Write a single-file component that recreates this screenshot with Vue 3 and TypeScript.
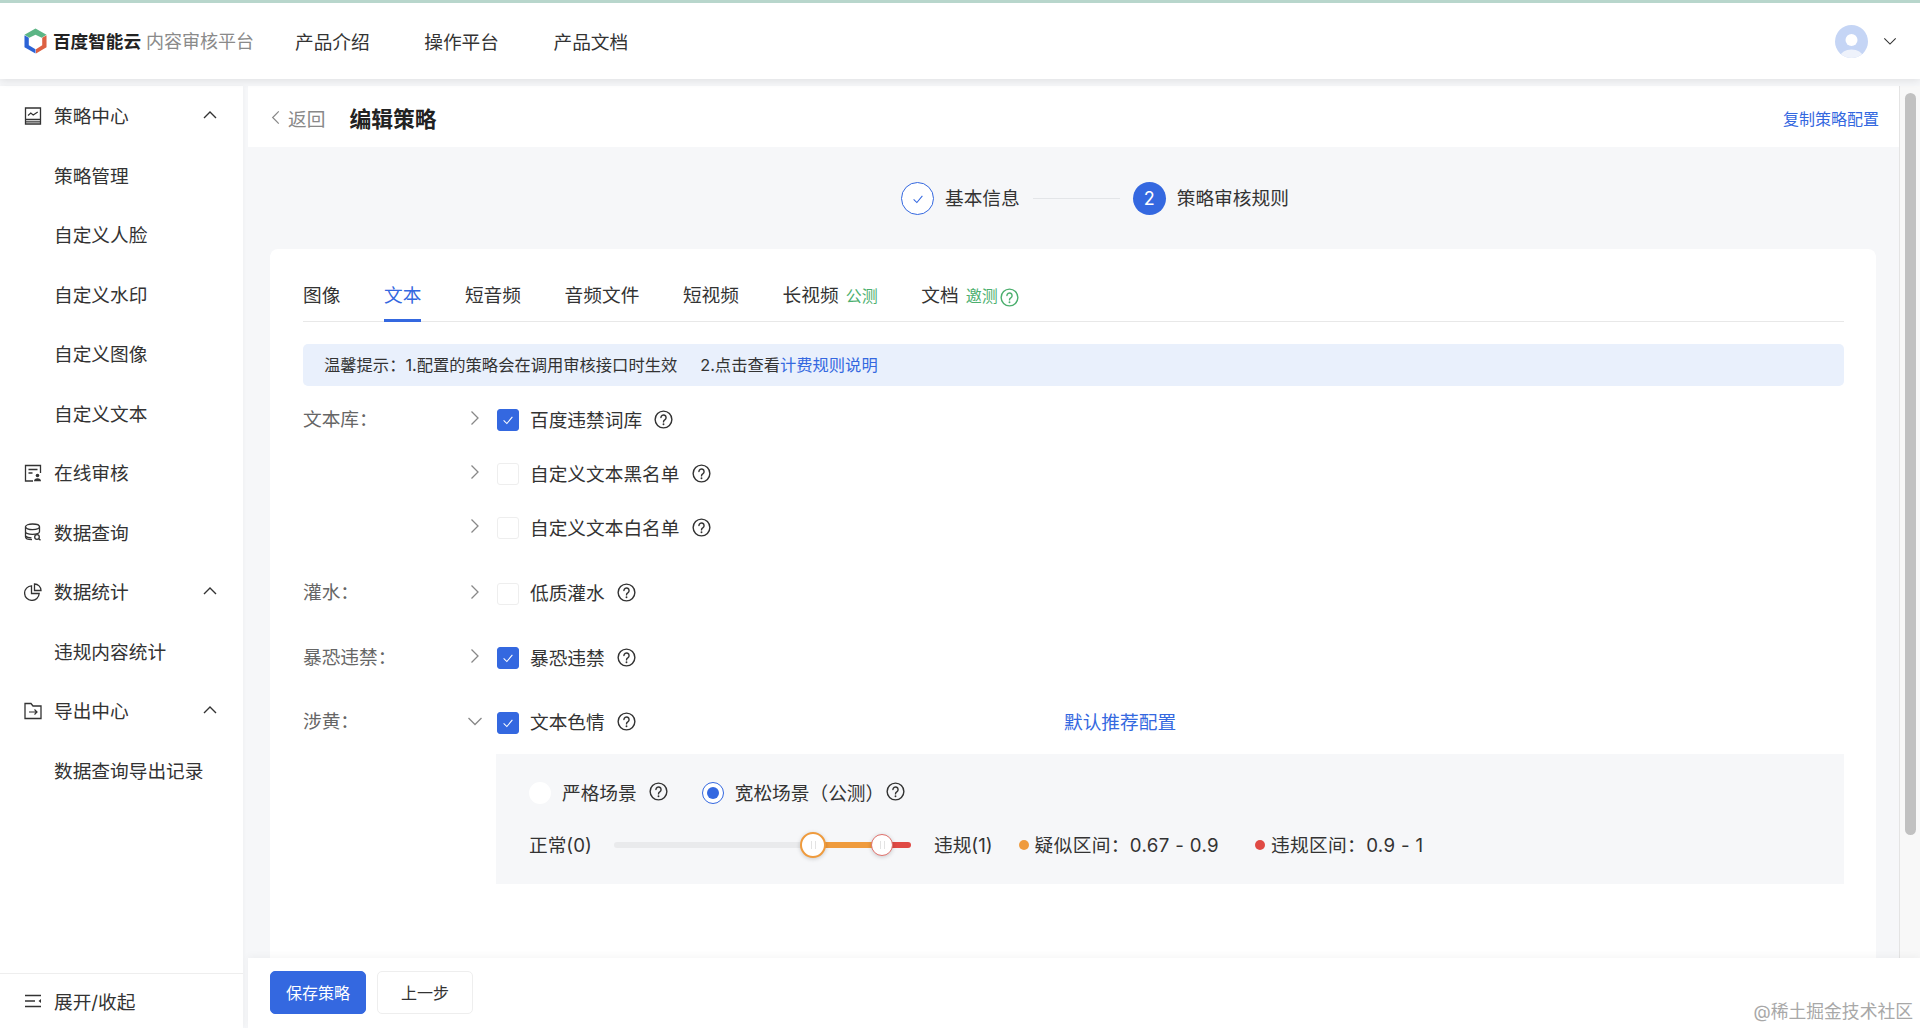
<script setup lang="ts">
interface MenuItem { label: string; icon?: string; sub?: boolean; arrow?: boolean }
interface FormRow { label: string; checked: boolean; text: string; open?: boolean; link?: string; lead?: boolean }

const nav: string[] = ['产品介绍', '操作平台', '产品文档']
const menu: MenuItem[] = [
  { label: '策略中心', icon: 'chart', arrow: true },
  { label: '策略管理', sub: true },
  { label: '自定义人脸', sub: true },
  { label: '自定义水印', sub: true },
  { label: '自定义图像', sub: true },
  { label: '自定义文本', sub: true },
  { label: '在线审核', icon: 'audit' },
  { label: '数据查询', icon: 'db' },
  { label: '数据统计', icon: 'pie', arrow: true },
  { label: '违规内容统计', sub: true },
  { label: '导出中心', icon: 'export', arrow: true },
  { label: '数据查询导出记录', sub: true }
]
const tabs = [
  { label: '图像' },
  { label: '文本', active: true },
  { label: '短音频' },
  { label: '音频文件' },
  { label: '短视频' },
  { label: '长视频', tag: '公测' },
  { label: '文档', tag: '邀测', help: true }
]
const rows: FormRow[] = [
  { label: '文本库：', checked: true, text: '百度违禁词库', lead: true },
  { label: '', checked: false, text: '自定义文本黑名单' },
  { label: '', checked: false, text: '自定义文本白名单' },
  { label: '灌水：', checked: false, text: '低质灌水', lead: true },
  { label: '暴恐违禁：', checked: true, text: '暴恐违禁', lead: true },
  { label: '涉黄：', checked: true, text: '文本色情', open: true, link: '默认推荐配置', lead: true }
]
</script>

<template>
  <div class="page">
    <svg class="sprite" aria-hidden="true">
      <symbol id="help" viewBox="0 0 20 20">
        <circle cx="10" cy="10" r="8.800" fill="none" stroke="currentColor" stroke-width="1.500" />
        <path d="M7.300 7.900a2.700 2.700 0 1 1 4.300 2.200c-1 .7-1.600 1.200-1.600 2.400" fill="none" stroke="currentColor" stroke-width="1.500" stroke-linecap="round" />
        <circle cx="10" cy="15" r="1" fill="currentColor" />
      </symbol>
      <symbol id="chev-right" viewBox="0 0 16 16">
        <path d="M4.500 1.500 11 8l-6.500 6.500" fill="none" stroke="currentColor" stroke-width="1.300" />
      </symbol>
      <symbol id="chev-down" viewBox="0 0 16 16">
        <path d="M1.500 5 8 11.500 14.500 5" fill="none" stroke="currentColor" stroke-width="1.300" />
      </symbol>
      <symbol id="chev-up" viewBox="0 0 16 16">
        <path d="M2 11 8 5l6 6" fill="none" stroke="currentColor" stroke-width="1.400" />
      </symbol>
      <symbol id="tick" viewBox="0 0 16 16">
        <path d="M3 8.300 6.700 12 13 4.500" fill="none" stroke="currentColor" stroke-width="1.200" />
      </symbol>
      <symbol id="chart" viewBox="0 0 18 18">
        <path d="M1.500 1h15v16h-15zM1.500 12.500h15M1.500 14.800h15" fill="none" stroke="currentColor" stroke-width="1.300" />
        <path d="M4 8.500 6.800 6l2.400 2 4.500-3" fill="none" stroke="currentColor" stroke-width="1.200" />
      </symbol>
      <symbol id="audit" viewBox="0 0 18 18">
        <path d="M9 17H1.500V1.500h15V9M4.500 5.500h9M4.500 9h4" fill="none" stroke="currentColor" stroke-width="1.300" />
        <circle cx="13.500" cy="11.500" r="1.800" fill="currentColor" />
        <path d="M10 17.300c0-2 1.500-3 3.500-3s3.500 1 3.500 3z" fill="currentColor" />
      </symbol>
      <symbol id="db" viewBox="0 0 18 18">
        <ellipse cx="8.500" cy="3.800" rx="7" ry="2.800" fill="none" stroke="currentColor" stroke-width="1.300" />
        <path d="M1.500 3.800v10c0 1.700 3 2.900 6.500 2.900M1.500 8.600c0 1.600 3 2.800 7 2.800s7-1.200 7-2.800V3.800M1.500 13c0 0 1.500 1.700 6 1.800" fill="none" stroke="currentColor" stroke-width="1.300" />
        <circle cx="13" cy="14" r="2.300" fill="none" stroke="currentColor" stroke-width="1.300" />
        <path d="m14.800 15.800 1.700 1.500" stroke="currentColor" stroke-width="1.300" />
      </symbol>
      <symbol id="pie" viewBox="0 0 18 18">
        <path d="M7.500 2.800a7.300 7.300 0 1 0 7.700 7.700H7.500z" fill="none" stroke="currentColor" stroke-width="1.300" />
        <path d="M10.500 1a6.500 6.500 0 0 1 6.500 6.500h-6.500z" fill="none" stroke="currentColor" stroke-width="1.300" />
      </symbol>
      <symbol id="export" viewBox="0 0 18 18">
        <path d="M1 16.500V1.500h6l2 2.500h8v12.500z" fill="none" stroke="currentColor" stroke-width="1.300" />
        <path d="M5 10h8M10.500 7.500 13 10l-2.500 2.500" fill="none" stroke="currentColor" stroke-width="1.200" />
      </symbol>
      <symbol id="toggle" viewBox="0 0 18 14">
        <path d="M1 1.500h16M1 7h10M1 12.500h16" fill="none" stroke="currentColor" stroke-width="1.400" />
        <path d="M17 5 14.500 7 17 9z" fill="currentColor" />
      </symbol>
    </svg>

    <header class="topbar">
      <div class="brand">
        <svg class="logo" viewBox="0 0 24 26" aria-hidden="true">
          <path d="M12 0 23.500 6.500 18.500 9.500 12 6.500 5.500 9.500.5 6.500z" fill="#5cb585" />
          <path d="M.5 7 5 9.600v7.900L12 21.500V26L.5 19.500z" fill="#2c63d6" />
          <path d="M23.500 7 19 9.600v7.900L12.500 21.500V26l11-6.500z" fill="#dd6042" />
        </svg>
        <span class="brand-main">百度智能云</span>
        <span class="brand-sub">内容审核平台</span>
      </div>
      <nav class="nav">
        <span v-for="n in nav" :key="n">{{ n }}</span>
      </nav>
      <div class="user">
        <svg class="avatar" viewBox="0 0 33 33" aria-hidden="true">
          <clipPath id="av"><circle cx="16.500" cy="16.500" r="16.500" /></clipPath>
          <g clip-path="url(#av)">
            <rect width="33" height="33" fill="#c5d5f5" />
            <circle cx="16.500" cy="15" r="6" fill="#fff" />
            <ellipse cx="16.500" cy="31" rx="11" ry="6.500" fill="#eef2fb" />
          </g>
        </svg>
        <svg class="user-chev" aria-hidden="true"><use href="#chev-down" /></svg>
      </div>
    </header>

    <div class="body">
      <aside class="sidebar">
        <ul class="menu">
          <li v-for="m in menu" :key="m.label" class="menu-item">
            <svg v-if="m.icon" class="menu-icon" aria-hidden="true"><use :href="'#' + m.icon" /></svg>
            <span :class="['menu-text', { 'menu-sub': m.sub }]">{{ m.label }}</span>
            <svg v-if="m.arrow" class="menu-arrow" aria-hidden="true"><use href="#chev-up" /></svg>
          </li>
        </ul>
        <div class="collapse">
          <svg class="menu-icon" aria-hidden="true"><use href="#toggle" /></svg>
          <span class="menu-text">展开/收起</span>
        </div>
      </aside>

      <main class="main">
        <div class="upper">
          <div class="content">
            <div class="titlebar">
              <svg class="back-chev" aria-hidden="true"><use href="#chev-right" /></svg>
              <span class="back">返回</span>
              <h1 class="title">编辑策略</h1>
              <a class="copy">复制策略配置</a>
            </div>

            <div class="steps">
              <span class="step-done"><svg class="step-tick" aria-hidden="true"><use href="#tick" /></svg></span>
              <span class="step-text">基本信息</span>
              <span class="step-line"></span>
              <span class="step-now">2</span>
              <span class="step-text">策略审核规则</span>
            </div>

            <section class="card">
              <div class="tabs">
                <div v-for="t in tabs" :key="t.label" :class="['tab', { active: t.active }]">
                  <span class="tab-label">{{ t.label }}</span>
                  <span v-if="t.tag" class="tab-tag">{{ t.tag }}</span>
                  <svg v-if="t.help" class="tab-help" aria-hidden="true"><use href="#help" /></svg>
                </div>
              </div>

              <div class="notice">
                <span>温馨提示：1.配置的策略会在调用审核接口时生效</span>
                <span class="notice-2">2.点击查看<a class="blue">计费规则说明</a></span>
              </div>

              <div class="form">
                <div v-for="r in rows" :key="r.text" :class="['row', { lead: r.lead }]">
                  <span class="row-label">{{ r.label }}</span>
                  <svg class="row-chev" aria-hidden="true"><use :href="r.open ? '#chev-down' : '#chev-right'" /></svg>
                  <span :class="['box', { on: r.checked }]">
                    <svg v-if="r.checked" class="box-tick" aria-hidden="true"><use href="#tick" /></svg>
                  </span>
                  <span class="row-text">{{ r.text }}</span>
                  <svg class="help" aria-hidden="true"><use href="#help" /></svg>
                  <a v-if="r.link" class="row-link">{{ r.link }}</a>
                </div>
              </div>

              <div class="panel">
                <div class="radios">
                  <span class="radio"></span>
                  <span class="radio-text">严格场景</span>
                  <svg class="help" aria-hidden="true"><use href="#help" /></svg>
                  <span class="radio on"><i></i></span>
                  <span class="radio-text">宽松场景（公测）</span>
                  <svg class="help tight" aria-hidden="true"><use href="#help" /></svg>
                </div>
                <div class="slider-row">
                  <span class="s-min">正常(0)</span>
                  <div class="slider">
                    <span class="seg seg-grey"></span>
                    <span class="seg seg-orange"></span>
                    <span class="seg seg-red"></span>
                    <span class="thumb thumb-a"><i></i></span>
                    <span class="thumb thumb-b"><i></i></span>
                  </div>
                  <span class="s-max">违规(1)</span>
                  <span class="dot orange"></span>
                  <span class="range">疑似区间：0.67 - 0.9</span>
                  <span class="dot red"></span>
                  <span class="range">违规区间：0.9 - 1</span>
                </div>
              </div>
            </section>
          </div>
          <div class="scrollbar"><span class="thumb-bar"></span></div>
        </div>

        <footer class="footer">
          <button class="btn primary">保存策略</button>
          <button class="btn">上一步</button>
        </footer>
      </main>
    </div>

    <div class="watermark">@稀土掘金技术社区</div>
  </div>
</template>

<style>
html, body { margin: 0; height: 100%; overflow: hidden; }
</style>

<style scoped>
.page {
  position: relative;
  width: 1920px;
  height: 1028px;
  display: flex;
  flex-direction: column;
  overflow: hidden;
  background: #f6f7f9;
  font-family: Inter, "Noto Sans CJK SC", "Noto Sans", sans-serif;
  font-size: 18.700px;
  color: #333;
}
.sprite { position: absolute; width: 0; height: 0; }

.topbar {
  position: relative;
  z-index: 3;
  flex: none;
  height: 76px;
  display: flex;
  align-items: center;
  padding: 0 23px 0 24px;
  background: #fff;
  border-top: 3px solid #b8d6cc;
  box-shadow: 0 2px 8px rgba(0, 0, 0, .09);
}
.brand { display: flex; align-items: center; width: 271px; }
.logo { width: 23px; height: 26px; margin-right: 6px; }
.brand-main { font-size: 17.600px; font-weight: 700; color: #222; margin-top: -2px; }
.brand-sub { font-size: 18px; color: #8a8a8a; margin: -2px 0 0 5px; }
.nav { display: flex; gap: 54.500px; color: #333; margin-top: -2px; }
.user { margin-left: auto; display: flex; align-items: center; gap: 15px; }
.avatar { width: 33px; height: 33px; }
.user-chev { width: 14px; height: 14px; color: #333; }

.body { flex: 1; min-height: 0; display: flex; margin-top: 7px; }

.sidebar {
  flex: none;
  width: 243px;
  display: flex;
  flex-direction: column;
  justify-content: space-between;
  background: #fff;
  box-shadow: 1px 0 4px rgba(0, 0, 0, .03);
}
.menu { list-style: none; margin: 0; padding: 0; }
.menu-item {
  position: relative;
  height: 59.500px;
  display: flex;
  align-items: center;
  padding-left: 24px;
}
.menu-icon { width: 18px; height: 18px; margin-right: 12px; color: #333; flex: none; }
.menu-text { margin-top: -2px; }
.menu-sub { margin-left: 30px; }
.menu-arrow { position: absolute; left: 202px; top: 21px; width: 16px; height: 16px; color: #333; }
.collapse {
  height: 54px;
  display: flex;
  align-items: center;
  padding-left: 24px;
  border-top: 1px solid #eeeeee;
}

.main { flex: 1; min-width: 0; display: flex; flex-direction: column; margin-left: 5px; }
.upper { flex: 1; min-height: 0; display: flex; }
.content { flex: 1; min-width: 0; display: flex; flex-direction: column; }
.scrollbar {
  flex: none;
  width: 21px;
  border-left: 1px solid #e4e4e4;
  background: #f8f8f8;
  box-sizing: border-box;
  padding: 7px 5px 0 5px;
}
.thumb-bar { display: block; width: 11px; height: 742px; border-radius: 6px; background: #c1c1c1; }

.titlebar {
  flex: none;
  height: 61px;
  display: flex;
  align-items: center;
  padding: 2px 20px 0 20px;
  box-sizing: border-box;
  background: #fff;
}
.back-chev { width: 15px; height: 15px; transform: scaleX(-1); color: #888; margin-right: 5px; }
.back { color: #888; }
.title { margin: 0 0 0 24px; font-size: 21.800px; font-weight: 700; color: #222; }
.copy { margin-left: auto; font-size: 16px; color: #3468e0; }

.steps {
  flex: none;
  height: 102px;
  box-sizing: border-box;
  padding: 35px 0 0 653px;
  display: flex;
  align-items: flex-start;
}
.step-done, .step-now {
  flex: none;
  width: 33px;
  height: 33px;
  box-sizing: border-box;
  border-radius: 50%;
  display: flex;
  align-items: center;
  justify-content: center;
}
.step-done { border: 1px solid #3468e0; background: #fff; color: #3468e0; }
.step-tick { width: 14px; height: 14px; }
.step-now { background: #3468e0; color: #fff; font-size: 18px; }
.step-text { line-height: 33px; margin-left: 11px; color: #333; }
.step-line { width: 87px; height: 1px; margin: 16px 13px 0 13px; background: #e3e5e8; }

.card {
  flex: 1;
  min-height: 0;
  margin: 0 23px 0 22px;
  padding: 30px 32px 0 33px;
  background: #fff;
  border-radius: 8px 8px 0 0;
}
.tabs { display: flex; gap: 43.600px; height: 42px; border-bottom: 1px solid #e8e8e8; }
.tab { position: relative; display: flex; height: 42px; line-height: 34px; color: #333; }
.tab.active { color: #3468e0; }
.tab.active::after {
  content: "";
  position: absolute;
  left: 0;
  right: 0;
  bottom: -1px;
  height: 3px;
  background: #3468e0;
}
.tab-tag { margin-left: 7px; font-size: 16px; color: #4caf6e; }
.tab-help { width: 19px; height: 19px; margin: 9px 0 0 2px; color: #4caf6e; }

.notice {
  height: 42px;
  margin-top: 22px;
  padding: 0 0 2px 21px;
  box-sizing: border-box;
  display: flex;
  align-items: center;
  border-radius: 5px;
  background: #e9f0fc;
  font-size: 16.300px;
  color: #333;
}
.notice-2 { margin-left: 23px; }
.blue { color: #3468e0; }

.form { margin-top: 7px; }
.row { position: relative; height: 54px; display: flex; align-items: center; }
.row.lead { margin-top: 10.500px; }
.row:first-child { margin-top: 0; }
.row:nth-child(4) { margin-top: 11.500px; }
.row-label { width: 164px; margin-top: -6px; color: #666; }
.row-chev { width: 16px; height: 16px; margin-top: -4px; color: #888; }
.box {
  width: 22px;
  height: 22px;
  margin-left: 14px;
  box-sizing: border-box;
  border: 1px solid #eeeeee;
  border-radius: 3px;
  background: #fff;
  display: flex;
  align-items: center;
  justify-content: center;
}
.box.on { background: #3468e0; border-color: #3468e0; color: #fff; }
.box-tick { width: 14px; height: 14px; }
.row-text { margin: -4px 0 0 11px; }
.help { width: 19px; height: 19px; margin: -2px 0 0 12px; color: #333; flex: none; }
.help.tight { margin-left: 2px; }
.row-link { position: absolute; left: 761px; margin-top: -4px; color: #3468e0; }

.panel {
  height: 130px;
  margin: 4px 0 0 193px;
  box-sizing: border-box;
  padding: 0 0 0 33px;
  background: #f6f7f9;
}
.radios { height: 78px; display: flex; align-items: center; }
.radio {
  flex: none;
  width: 22px;
  height: 22px;
  box-sizing: border-box;
  border-radius: 50%;
  background: #fff;
  display: flex;
  align-items: center;
  justify-content: center;
}
.radio.on { border: 1px solid #3468e0; margin-left: 34px; }
.radio.on i { width: 12px; height: 12px; border-radius: 50%; background: #3468e0; }
.radio-text { margin: -2px 0 0 11px; }

.slider-row { height: 26px; margin-top: 0; display: flex; align-items: center; }
.s-min { width: 85px; margin-top: -2px; }
.slider { position: relative; flex: none; width: 297px; height: 6px; display: flex; }
.seg { display: block; height: 6px; }
.seg-grey { width: 199px; background: #e9eaec; border-radius: 3px 0 0 3px; }
.seg-orange { width: 69px; background: #ef9b3d; }
.seg-red { width: 29px; background: #e04a45; border-radius: 0 3px 3px 0; }
.thumb {
  position: absolute;
  top: 50%;
  box-sizing: border-box;
  border-radius: 50%;
  background: #fff;
  transform: translate(-50%, -50%);
  box-shadow: 0 1px 4px rgba(0, 0, 0, .18);
  display: flex;
  justify-content: center;
  align-items: center;
}
.thumb i { width: 5px; height: 8px; border-left: 1px solid #e3e3e3; border-right: 1px solid #e3e3e3; box-sizing: border-box; }
.thumb-a { left: 199px; width: 26px; height: 26px; border: 2px solid #ef9b3d; }
.thumb-b { left: 268px; width: 22px; height: 22px; border: 1px solid #e0716c; }
.s-max { margin: -2px 0 0 23px; }
.dot { flex: none; width: 10px; height: 10px; border-radius: 50%; }
.dot.orange { margin-left: 26px; background: #ef9b3d; }
.dot.red { margin-left: 36px; background: #e04a45; }
.range { margin: -2px 0 0 6px; letter-spacing: .35px; }

.footer {
  position: relative;
  z-index: 2;
  flex: none;
  height: 70px;
  box-sizing: border-box;
  padding: 13px 0 0 22px;
  display: flex;
  align-items: flex-start;
  gap: 11px;
  background: #fff;
  box-shadow: 0 -2px 8px rgba(0, 0, 0, .04);
}
.btn {
  width: 96px;
  height: 43px;
  padding: 0 0 2px;
  border: 1px solid #eeeeee;
  border-radius: 5px;
  background: #fff;
  font: inherit;
  font-size: 16px;
  color: #333;
}
.btn.primary { background: #3468e0; border-color: #3468e0; color: #fff; }

.watermark {
  position: absolute;
  z-index: 4;
  right: 7px;
  bottom: 3px;
  font-size: 17.800px;
  color: #a8a8a8;
  line-height: 26px;
}
</style>
